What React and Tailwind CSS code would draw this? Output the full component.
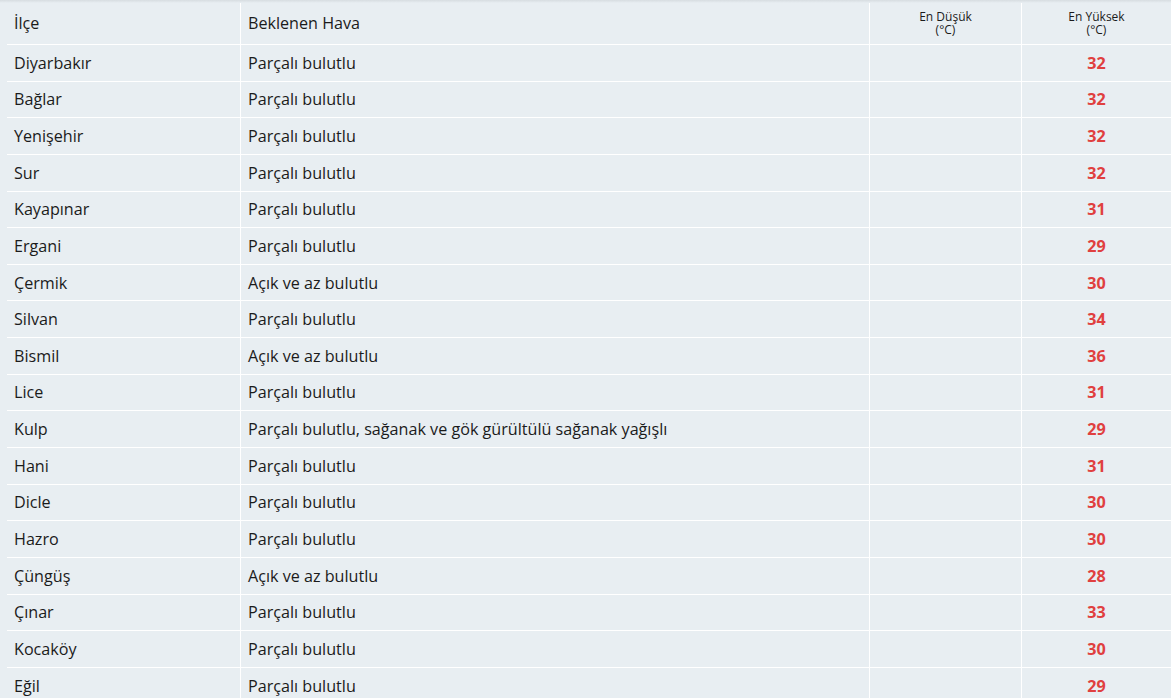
import React from 'react';

const rows = [
  ['Diyarbakır', 'Parçalı bulutlu', '32'],
  ['Bağlar', 'Parçalı bulutlu', '32'],
  ['Yenişehir', 'Parçalı bulutlu', '32'],
  ['Sur', 'Parçalı bulutlu', '32'],
  ['Kayapınar', 'Parçalı bulutlu', '31'],
  ['Ergani', 'Parçalı bulutlu', '29'],
  ['Çermik', 'Açık ve az bulutlu', '30'],
  ['Silvan', 'Parçalı bulutlu', '34'],
  ['Bismil', 'Açık ve az bulutlu', '36'],
  ['Lice', 'Parçalı bulutlu', '31'],
  ['Kulp', 'Parçalı bulutlu, sağanak ve gök gürültülü sağanak yağışlı', '29'],
  ['Hani', 'Parçalı bulutlu', '31'],
  ['Dicle', 'Parçalı bulutlu', '30'],
  ['Hazro', 'Parçalı bulutlu', '30'],
  ['Çüngüş', 'Açık ve az bulutlu', '28'],
  ['Çınar', 'Parçalı bulutlu', '33'],
  ['Kocaköy', 'Parçalı bulutlu', '30'],
  ['Eğil', 'Parçalı bulutlu', '29'],
];

export default function App() {
  return (
    <div
      className="h-[698px] overflow-hidden bg-[#e8eef2] pl-[7px] text-[#1b1b1b]"
      style={{ fontFamily: '"Open Sans", "DejaVu Sans", sans-serif' }}
    >
      <div className="pointer-events-none absolute left-0 top-0 h-[3px] w-full bg-gradient-to-b from-[#d7dde1] to-[#e8eef2]" />
      {/* Header */}
      <div className="flex h-[45px] border-b border-white">
        <div className="flex w-[233px] items-center pl-[7px] pt-[2px] text-[16.15px]">İlçe</div>
        <div className="mt-[2px] flex w-[629px] items-center border-l border-white pl-[7px] text-[16.15px]">
          Beklenen Hava
        </div>
        <div className="mt-[2px] flex w-[152px] flex-col items-center justify-center border-l border-white pb-[1px] text-[12px] leading-[13px]">
          <span>En Düşük</span>
          <span>(°C)</span>
        </div>
        <div className="mt-[2px] flex flex-1 flex-col items-center justify-center border-l border-white pb-[1px] text-[12px] leading-[13px]">
          <span>En Yüksek</span>
          <span>(°C)</span>
        </div>
      </div>
      {/* Body */}
      {rows.map(([ilce, hava, max]) => (
        <div key={ilce} className="flex h-[36.65px] border-b border-white text-[16.15px]">
          <div className="flex w-[233px] items-center pl-[7px]">{ilce}</div>
          <div className="flex w-[629px] items-center border-l border-white pl-[7px]">{hava}</div>
          <div className="w-[152px] border-l border-white" />
          <div className="flex flex-1 items-center justify-center border-l border-white font-bold text-[#e0403f]">
            {max}
          </div>
        </div>
      ))}
    </div>
  );
}
